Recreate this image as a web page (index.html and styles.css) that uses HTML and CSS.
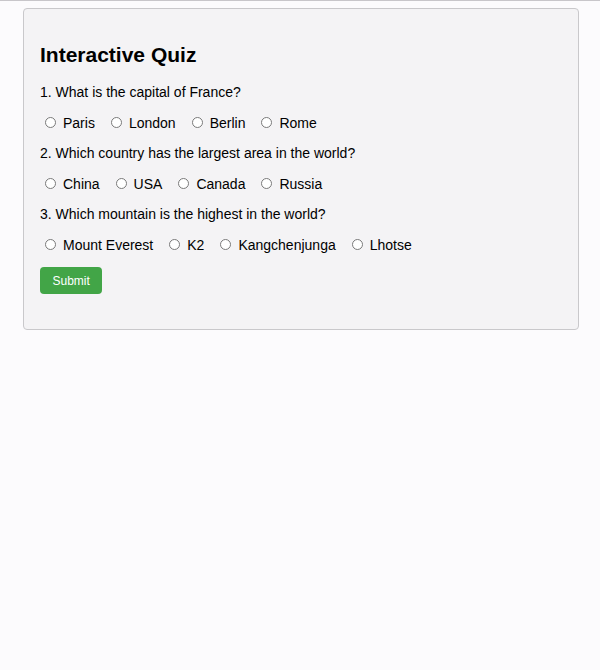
FILE: index.html
```html
<!DOCTYPE html>
<html lang="en">
<head>
<meta charset="utf-8">
<title>Interactive Quiz</title>
<link rel="stylesheet" href="styles.css">
</head>
<body>
<form class="quiz">
  <h2 class="quiz-title">Interactive Quiz</h2>
  <p class="question">1. What is the capital of France?</p>
  <div class="options">
    <label class="option"><input type="radio" name="q1" class="radio"><span>Paris</span></label>
    <label class="option"><input type="radio" name="q1" class="radio"><span>London</span></label>
    <label class="option"><input type="radio" name="q1" class="radio"><span>Berlin</span></label>
    <label class="option"><input type="radio" name="q1" class="radio"><span>Rome</span></label>
  </div>
  <p class="question">2. Which country has the largest area in the world?</p>
  <div class="options">
    <label class="option"><input type="radio" name="q2" class="radio"><span>China</span></label>
    <label class="option"><input type="radio" name="q2" class="radio"><span>USA</span></label>
    <label class="option"><input type="radio" name="q2" class="radio"><span>Canada</span></label>
    <label class="option"><input type="radio" name="q2" class="radio"><span>Russia</span></label>
  </div>
  <p class="question">3. Which mountain is the highest in the world?</p>
  <div class="options">
    <label class="option"><input type="radio" name="q3" class="radio"><span>Mount Everest</span></label>
    <label class="option"><input type="radio" name="q3" class="radio"><span>K2</span></label>
    <label class="option"><input type="radio" name="q3" class="radio"><span>Kangchenjunga</span></label>
    <label class="option"><input type="radio" name="q3" class="radio"><span>Lhotse</span></label>
  </div>
  <div class="actions">
    <button type="button" class="submit-btn">Submit</button>
  </div>
</form>
</body>
</html>
```

FILE: styles.css
```css
html {
  background: #fcfbfd;
}

body {
  margin: 0;
  border-top: 1px solid #c8c6ca;
  font-family: "Liberation Sans", Arial, sans-serif;
  color: #000;
}

.quiz {
  margin: 7px 21px 0 23px;
  padding: 16px 16px 35px;
  background: #f4f3f5;
  border: 1px solid #c9c8cb;
  border-radius: 4px;
  display: flex;
  flex-direction: column;
  gap: 14.5px;
}

.quiz-title {
  margin: 18px 0 2.5px;
  font-size: 21px;
  line-height: 24px;
  font-weight: bold;
}

.question {
  margin: 0;
  font-size: 14px;
  line-height: 16px;
}

.options {
  display: flex;
  align-items: center;
  gap: 16px;
  padding-left: 5px;
  font-size: 14px;
  line-height: 16px;
}

.option {
  display: inline-flex;
  align-items: center;
  gap: 7px;
  height: 16px;
}

.radio {
  appearance: none;
  -webkit-appearance: none;
  margin: 0;
  width: 11px;
  height: 11px;
  border: 1px solid #7a7a7a;
  border-radius: 50%;
  background: #fff;
  flex: none;
}

.actions {
  display: flex;
}

.submit-btn {
  height: 27px;
  padding: 0 12.5px;
  border: none;
  border-radius: 4px;
  background: #42a547;
  color: #fff;
  font-family: "Liberation Sans", Arial, sans-serif;
  font-size: 12px;
  cursor: pointer;
}
```
